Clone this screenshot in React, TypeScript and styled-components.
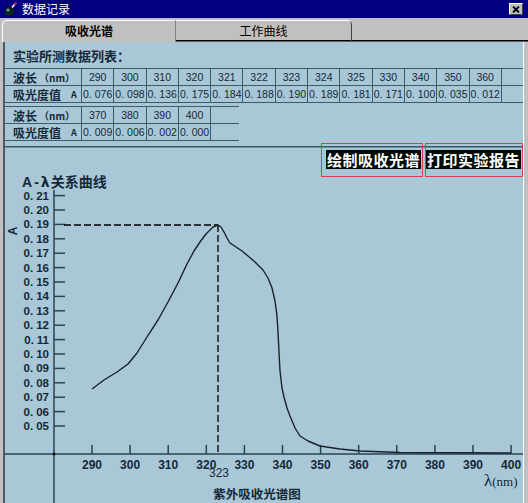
import React from 'react';
import styled, { createGlobalStyle } from 'styled-components';

const CJK = '"Noto Sans CJK SC", "Liberation Sans", sans-serif';
const NUM = '"Liberation Sans", "Noto Sans CJK SC", sans-serif';
const PANEL = '#a9c7d6';
const LINE = '#3e5b6b';
const INK = '#13293a';
const AXIS = '#2a4352';

const GlobalStyle = createGlobalStyle`
    *, *::before, *::after {
        box-sizing: border-box;
    }
    html, body {
        margin: 0;
        padding: 0;
        background: #c0c0c0;
    }
    body {
        font-family: ${CJK};
    }
`;

const Window = styled.div`
    width: 528px;
    height: 503px;
    overflow: hidden;
    background: #c0c0c0;
    display: flex;
    flex-direction: column;
`;

const TitleBar = styled.div`
    height: 18px;
    flex-shrink: 0;
    margin-bottom: 1px;
    background: #000080;
    display: flex;
    align-items: center;
    padding-left: 3px;
`;

const Title = styled.span`
    color: #fff;
    font-size: 12px;
    margin-left: 4px;
    line-height: 18px;
`;

const CloseButton = styled.div`
    margin-left: auto;
    margin-right: 5px;
    width: 14px;
    height: 12px;
    background: #c0c0c0;
    border: 1px solid;
    border-color: #fff #404040 #404040 #fff;
    display: flex;
    align-items: center;
    justify-content: center;
`;

const TabStrip = styled.div`
    height: 23px;
    flex-shrink: 0;
    display: flex;
    padding-left: 2px;
    padding-top: 1px;
`;

const Tab = styled.div<{ $active?: boolean }>`
    width: ${(p) => (p.$active ? '174px' : '176px')};
    display: flex;
    align-items: center;
    justify-content: center;
    font-size: 12px;
    color: #000;
    font-weight: ${(p) => (p.$active ? 700 : 400)};
    border-top: 1px solid #fff;
    border-left: ${(p) => (p.$active ? '1px solid #fff' : 'none')};
    border-right: 1px solid ${(p) => (p.$active ? '#808080' : '#404040')};
    border-top-left-radius: ${(p) => (p.$active ? '5px' : '0')};
    border-top-right-radius: ${(p) => (p.$active ? '0' : '5px')};
    border-bottom: ${(p) => (p.$active ? 'none' : '1px solid #606060')};
    box-shadow: ${(p) => (p.$active ? 'none' : 'inset 0 -1px #000')};
    padding-bottom: 2px;
`;

const TabFill = styled.div`
    flex: 1;
    border-bottom: 1px solid #606060;
    box-shadow: inset 0 -1px #000;
`;

const Panel = styled.div`
    flex: 1;
    min-height: 0;
    margin: 0 4px 0 3px;
    background: ${PANEL};
    border-left: 2px solid #4c5c64;
    border-right: 1px solid #fff;
    overflow: hidden;
`;

const Caption = styled.div`
    height: 26px;
    padding-left: 8px;
    display: flex;
    align-items: center;
    font-size: 13px;
    font-weight: 700;
    color: ${INK};
`;

const DataGrid = styled.div<{ $cols: number; $width: string; $gap?: number }>`
    display: grid;
    grid-template-columns: 77px repeat(${(p) => p.$cols}, 32.3px) 1fr;
    width: ${(p) => p.$width};
    margin-top: ${(p) => p.$gap ?? 0}px;
    border-top: 1px solid ${LINE};
`;

const Cell = styled.div<{ $head?: boolean; $filler?: boolean }>`
    height: 17px;
    border-bottom: 1px solid ${LINE};
    border-right: ${(p) => (p.$filler ? 'none' : `1px solid ${LINE}`)};
    display: flex;
    align-items: center;
    justify-content: ${(p) => (p.$head ? 'flex-start' : 'center')};
    padding-left: ${(p) => (p.$head ? '8px' : '0')};
    font-family: ${(p) => (p.$head ? CJK : NUM)};
    font-weight: ${(p) => (p.$head ? 700 : 400)};
    font-size: ${(p) => (p.$head ? '12px' : '10.5px')};
    color: ${INK};
    white-space: nowrap;
    overflow: hidden;
`;

const Unit = styled.span<{ $gap: number }>`
    font-size: ${(p) => (p.$gap > 6 ? '9px' : '10px')};
    margin-left: ${(p) => p.$gap}px;
`;

const Dot = styled.span`
    margin-right: 3px;
`;

const Divider = styled.div`
    margin-top: 5px;
    height: 2px;
    border-top: 1px solid #3a5666;
    border-bottom: 1px solid #6f8f9f;
`;

const ButtonRow = styled.div`
    display: flex;
    justify-content: flex-end;
    gap: 2px;
    margin-top: -5px;
`;

const ButtonFrame = styled.div<{ $inset: number }>`
    height: 34px;
    border: 1px solid #d8404c;
    padding: 6px 1px 7px ${(p) => p.$inset}px;
    display: flex;
`;

const ActionButton = styled.button`
    height: 19px;
    padding: 0 1px;
    margin: 0;
    border: none;
    background: #000a04;
    color: #fff;
    font-family: ${CJK};
    font-weight: 700;
    font-size: 15px;
    line-height: 19px;
    letter-spacing: 0.5px;
    white-space: nowrap;
`;

const ChartSvg = styled.svg`
    display: block;
    overflow: visible;
`;

const wavelengths1 = ['290', '300', '310', '320', '321', '322', '323', '324', '325', '330', '340', '350', '360'];
const absorb1 = ['0.076', '0.098', '0.136', '0.175', '0.184', '0.188', '0.190', '0.189', '0.181', '0.171', '0.100', '0.035', '0.012'];
const wavelengths2 = ['370', '380', '390', '400'];
const absorb2 = ['0.009', '0.006', '0.002', '0.000'];

const Value = ({ v }: { v: string }): JSX.Element => {
    const [a, b] = v.split('.');
    if (b === undefined) return <>{v}</>;
    return (
        <>
            {a}
            <Dot>.</Dot>
            {b}
        </>
    );
};

const DataTable = (props: { waves: string[]; values: string[]; width: string; gap?: number }): JSX.Element => (
    <DataGrid $cols={props.waves.length} $width={props.width} $gap={props.gap}>
        <Cell $head>
            波长<Unit $gap={2}>（nm）</Unit>
        </Cell>
        {props.waves.map((w) => (
            <Cell key={w}>{w}</Cell>
        ))}
        <Cell $filler />
        <Cell $head>
            吸光度值<Unit $gap={10}>A</Unit>
        </Cell>
        {props.values.map((v, i) => (
            <Cell key={i}>
                <Value v={v} />
            </Cell>
        ))}
        <Cell $filler />
    </DataGrid>
);

const AppIcon = (): JSX.Element => (
    <svg width="15" height="15" viewBox="0 0 15 15">
        <circle cx="6.5" cy="9.5" r="4.8" fill="#0c2418" />
        <circle cx="5" cy="8" r="1.6" fill="#6f9f88" />
        <path d="M9 5.5 L11.5 2.5" stroke="#fff" strokeWidth="1.6" />
        <path d="M11.5 2.5 L13.5 0.5" stroke="#e42a2a" strokeWidth="1.8" />
    </svg>
);

const yOf = (v: number): number => 426 - (v - 0.05) * 1440;
const xOf = (l: number): number => 92 + (l - 290) * 3.81;

const yTicks = [0.21, 0.2, 0.19, 0.18, 0.17, 0.16, 0.15, 0.14, 0.13, 0.12, 0.11, 0.1, 0.09, 0.08, 0.07, 0.06, 0.05];
const xTicks = [290, 300, 310, 320, 330, 340, 350, 360, 370, 380, 390, 400];

const curve = [
    [92, 389], [104, 380], [117, 372], [128, 364], [137, 353], [147, 337], [158, 320], [168, 302],
    [178, 283], [187, 264], [194, 251], [200, 242], [206, 234], [213, 227], [218, 225],
    [221, 227], [224, 232], [227, 238], [230, 243], [236, 247], [242, 251], [248, 256], [255, 262],
    [263, 270], [268, 278], [272, 288], [275, 301], [277, 316], [278, 332], [279, 352], [280, 371],
    [282, 388], [284, 397], [287, 408], [290, 416], [295, 428], [300, 436], [308, 441], [320, 446],
    [340, 449], [360, 451], [400, 452.5], [511, 453],
];

const Chart = (): JSX.Element => (
    <ChartSvg width="518" height="340" viewBox="5 177 518 340">
        <text x="22" y="187" fill={INK} fontWeight="700" fontSize="14" fontFamily={CJK}>
            <tspan fontFamily={NUM}>A</tspan>
            <tspan dx="2" fontFamily={NUM}>-</tspan>
            <tspan dx="2" fontFamily='"DejaVu Sans", sans-serif'>λ</tspan>
            <tspan dx="1">关系曲线</tspan>
        </text>
        <text
            x="13"
            y="231"
            transform="rotate(-90 13 231)"
            textAnchor="middle"
            dominantBaseline="central"
            fill={INK}
            fontWeight="700"
            fontSize="12"
            fontFamily={NUM}
        >
            A
        </text>
        <line x1="54" y1="190" x2="54" y2="520" stroke={AXIS} strokeWidth="1.5" />
        <line x1="5" y1="454" x2="523" y2="454" stroke={AXIS} strokeWidth="1.5" />
        <circle cx="54" cy="454" r="1.5" fill="#000" />
        {yTicks.map((v) => (
            <g key={v}>
                <line x1="54" y1={yOf(v)} x2="65" y2={yOf(v)} stroke={AXIS} strokeWidth="1.5" />
                <text x="49" y={yOf(v) + 4} textAnchor="end" fill={INK} fontWeight="700" fontSize="11.5" fontFamily={NUM}>
                    0.<tspan dx="3">{v.toFixed(2).slice(2)}</tspan>
                </text>
            </g>
        ))}
        {xTicks.map((l) => (
            <g key={l}>
                <line x1={xOf(l)} y1="445" x2={xOf(l)} y2="454" stroke={AXIS} strokeWidth="1.5" />
                <text x={xOf(l)} y="469" textAnchor="middle" fill={INK} fontWeight="700" fontSize="12" fontFamily={NUM}>
                    {l}
                </text>
            </g>
        ))}
        <line x1="64" y1="225" x2="218" y2="225" stroke="#000" strokeWidth="1.3" strokeDasharray="7 3" />
        <line x1="218" y1="225" x2="218" y2="454" stroke="#000" strokeWidth="1.3" strokeDasharray="7 3" />
        <text x="219" y="477" textAnchor="middle" fill={INK} fontSize="12" fontFamily={NUM}>
            323
        </text>
        <polyline
            points={curve.map((p) => p.join(',')).join(' ')}
            fill="none"
            stroke="#16222c"
            strokeWidth="1.4"
            strokeLinejoin="round"
        />
        <text x="484" y="486" fill={INK} fontFamily='"Liberation Serif", serif'>
            <tspan fontSize="17">λ</tspan>
            <tspan fontSize="13">(nm)</tspan>
        </text>
        <text x="257" y="499" textAnchor="middle" fill={INK} fontWeight="700" fontSize="12.5" fontFamily={CJK}>
            紫外吸收光谱图
        </text>
    </ChartSvg>
);

const App = (): JSX.Element => (
    <>
        <GlobalStyle />
        <Window>
            <TitleBar>
                <AppIcon />
                <Title>数据记录</Title>
                <CloseButton>
                    <svg width="8" height="7" viewBox="0 0 8 7">
                        <path d="M1 0.5 L7 6.5 M7 0.5 L1 6.5" stroke="#000" strokeWidth="1.8" />
                    </svg>
                </CloseButton>
            </TitleBar>
            <TabStrip>
                <Tab $active>吸收光谱</Tab>
                <Tab>工作曲线</Tab>
                <TabFill />
            </TabStrip>
            <Panel>
                <Caption>实验所测数据列表：</Caption>
                <DataTable waves={wavelengths1} values={absorb1} width="100%" />
                <DataTable waves={wavelengths2} values={absorb2} width="234px" gap={3} />
                <Divider />
                <ButtonRow>
                    <ButtonFrame $inset={4}>
                        <ActionButton>绘制吸收光谱</ActionButton>
                    </ButtonFrame>
                    <ButtonFrame $inset={0}>
                        <ActionButton>打印实验报告</ActionButton>
                    </ButtonFrame>
                </ButtonRow>
                <Chart />
            </Panel>
        </Window>
    </>
);

export default App;
